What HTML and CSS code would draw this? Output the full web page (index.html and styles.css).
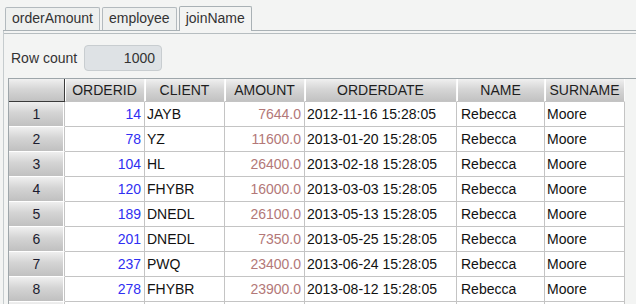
FILE: index.html
```html
<!DOCTYPE html>
<html lang="en">
<head>
<meta charset="UTF-8" />
<title>joinName</title>
<link rel="stylesheet" href="styles.css">
</head>
<body>
<div class="tabbar">
  <div class="tab">orderAmount</div>
  <div class="tab">employee</div>
  <div class="tab active">joinName</div>
</div>

<div class="panel">
  <div class="panel-inner">
    <div class="rowcount">
      <span class="rowcount-label">Row count</span>
      <span class="rowcount-box">1000</span>
    </div>

    <div class="grid">
      <table>
        <colgroup>
          <col class="c-head" />
          <col class="c-80" />
          <col class="c-80" />
          <col class="c-80" />
          <col class="c-date" />
          <col class="c-name" />
          <col class="c-80" />
        </colgroup>
        <thead>
          <tr>
            <th class="corner"></th>
            <th>ORDERID</th>
            <th>CLIENT</th>
            <th>AMOUNT</th>
            <th>ORDERDATE</th>
            <th>NAME</th>
            <th>SURNAME</th>
          </tr>
        </thead>
        <tbody>
          <tr><th>1</th><td class="id">14</td><td>JAYB</td><td class="amt">7644.0</td><td>2012-11-16 15:28:05</td><td class="name">Rebecca</td><td>Moore</td></tr>
          <tr><th>2</th><td class="id">78</td><td>YZ</td><td class="amt">11600.0</td><td>2013-01-20 15:28:05</td><td class="name">Rebecca</td><td>Moore</td></tr>
          <tr><th>3</th><td class="id">104</td><td>HL</td><td class="amt">26400.0</td><td>2013-02-18 15:28:05</td><td class="name">Rebecca</td><td>Moore</td></tr>
          <tr><th>4</th><td class="id">120</td><td>FHYBR</td><td class="amt">16000.0</td><td>2013-03-03 15:28:05</td><td class="name">Rebecca</td><td>Moore</td></tr>
          <tr><th>5</th><td class="id">189</td><td>DNEDL</td><td class="amt">26100.0</td><td>2013-05-13 15:28:05</td><td class="name">Rebecca</td><td>Moore</td></tr>
          <tr><th>6</th><td class="id">201</td><td>DNEDL</td><td class="amt">7350.0</td><td>2013-05-25 15:28:05</td><td class="name">Rebecca</td><td>Moore</td></tr>
          <tr><th>7</th><td class="id">237</td><td>PWQ</td><td class="amt">23400.0</td><td>2013-06-24 15:28:05</td><td class="name">Rebecca</td><td>Moore</td></tr>
          <tr><th>8</th><td class="id">278</td><td>FHYBR</td><td class="amt">23900.0</td><td>2013-08-12 15:28:05</td><td class="name">Rebecca</td><td>Moore</td></tr>
          <tr><th></th><td></td><td></td><td></td><td></td><td></td><td></td></tr>
        </tbody>
      </table>
    </div>
  </div>
</div>
</body>
</html>
```

FILE: styles.css
```css
* {
  box-sizing: border-box;
}
html, body {
  height: 100%;
}
body {
  margin: 0;
  background: #f3f4f3;
  color: #222;
  font-family: 'Liberation Sans', Arial, sans-serif;
  font-size: 14px;
  overflow: hidden;
}

/* tabs */
.tabbar {
  display: flex;
  align-items: flex-end;
  height: 31px;
  padding-left: 5px;
  margin-left: 3px;
  border-bottom: 1px solid #a9b1b5;
}
.tab {
  height: 23px;
  line-height: 21px;
  padding: 0 6px;
  margin-right: 2px;
  border: 1px solid #b3babe;
  border-bottom: none;
  border-radius: 2px 2px 0 0;
  background: #eef0ef;
  color: #333;
}
.tab:first-child {
  margin-left: -3px;
}
.tab.active {
  height: 25px;
  margin-bottom: -1px;
  padding: 1px 6px 0;
  background: #f3f4f3;
  border-color: #a9b1b5;
}

/* panel */
.panel {
  margin-left: 3px;
  border-left: 1px solid #c6ccce;
  padding-top: 2px;
  height: 100%;
}
.panel-inner {
  border-top: 1px solid #b6bdc0;
}
.rowcount {
  display: flex;
  align-items: center;
  height: 26px;
  margin: 11px 0 7px 7px;
}
.rowcount-label {
  width: 73px;
  color: #333;
}
.rowcount-box {
  width: 78px;
  height: 26px;
  line-height: 24px;
  padding-right: 6px;
  text-align: right;
  background: #dee2e5;
  border: 1px solid #c8cdd0;
  border-radius: 4px;
  color: #333;
}

/* table */
.grid {
  margin-left: 4px;
  border-top: 1px solid #9ea6aa;
  border-left: 1px solid #9ea6aa;
}
table {
  border-collapse: separate;
  border-spacing: 0;
  table-layout: fixed;
  width: 616px;
}
col.c-head { width: 56px; }
col.c-80 { width: 80px; }
col.c-date { width: 152px; }
col.c-name { width: 88px; }

thead th {
  height: 23px;
  padding: 0;
  font-weight: normal;
  text-align: center;
  color: #1e1e1e;
  background: linear-gradient(#f0f0f0, #d6d6d6 45%, #c2c2c2);
  border-right: 1px solid #fafafa;
  border-bottom: 1px solid #c4c4c4;
  box-shadow: inset 1px 0 #ffffff;
}
thead th.corner {
  border-right: 1px solid #3a3a3a;
  border-bottom: 1px solid #3a3a3a;
  box-shadow: none;
}
tbody th {
  height: 25px;
  padding: 0;
  font-weight: normal;
  text-align: center;
  color: #1c1c30;
  background: linear-gradient(#efefef, #d4d4d4 45%, #c0c0c0);
  border-right: 1px solid #c4c4c4;
  border-bottom: 1px solid #ffffff;
  box-shadow: inset -1px 0 #ffffff;
}
tbody td {
  height: 25px;
  padding: 0 2px;
  white-space: nowrap;
  overflow: hidden;
  background: #fff;
  color: #111;
  border-right: 1px solid #c4c4c4;
  border-bottom: 1px solid #c4c4c4;
}
td.id {
  text-align: right;
  padding-right: 3px;
  color: #2f2ff2;
}
td.amt {
  text-align: right;
  padding-right: 3px;
  color: #b37878;
}
td.name {
  padding-left: 4px;
}
```
